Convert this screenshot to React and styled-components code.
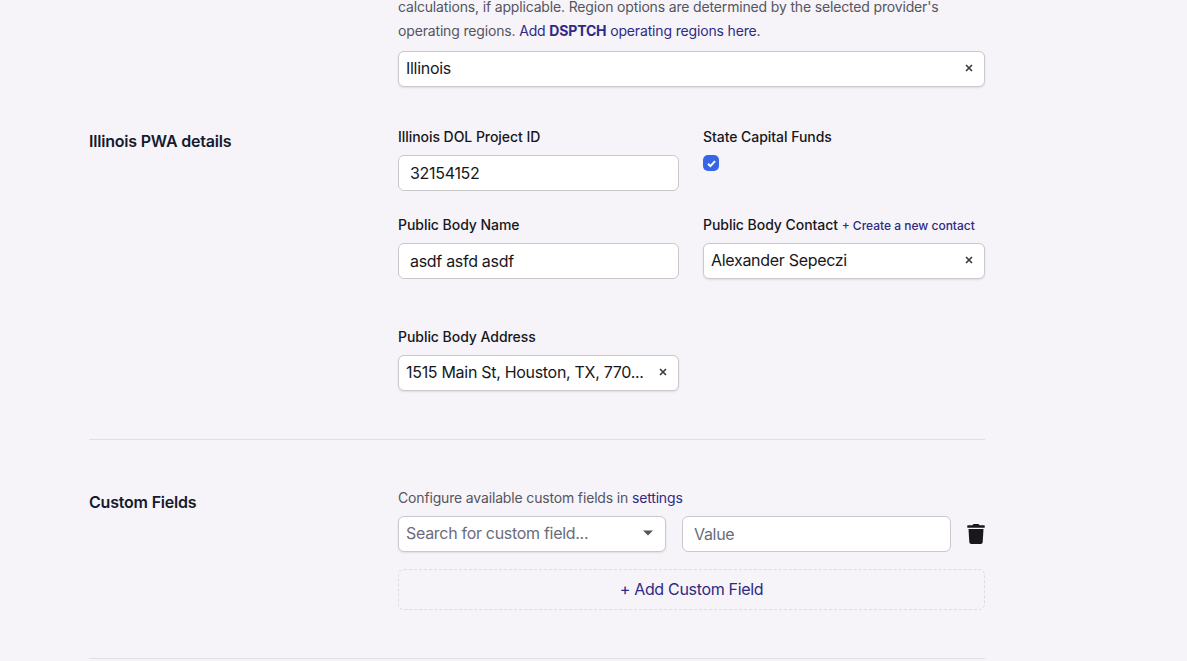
import React from "react";
import styled, { createGlobalStyle } from "styled-components";
import { FaTrash } from "react-icons/fa";

const GlobalStyle = createGlobalStyle`
  html, body {
    margin: 0;
    padding: 0;
    height: 100%;
    overflow: hidden;
    background: #f6f4f8;
    font-family: Inter, "Liberation Sans", sans-serif;
  }
`;

const Page = styled.div`
  width: 896px;
  margin: -5px 0 0 89px;
`;

const Section = styled.section`
  display: grid;
  grid-template-columns: 309px 587px;
  padding-bottom: ${(p) => p.$bottom}px;
  border-bottom: ${(p) => (p.$divider ? "1px solid #dfdee3" : "none")};
  margin-bottom: ${(p) => p.$after}px;
`;

const SectionTitle = styled.h2`
  margin: 0;
  padding-top: ${(p) => p.$top}px;
  font-size: 16px;
  line-height: 24px;
  font-weight: 600;
  letter-spacing: -0.2px;
  color: #171a2e;
`;

const SectionBody = styled.div`
  padding-top: ${(p) => p.$top || 0}px;
`;

const Help = styled.p`
  margin: 0 0 ${(p) => p.$gap}px;
  font-size: 14px;
  line-height: 24px;
  letter-spacing: -0.16px;
  color: #55555f;
`;

const TextLink = styled.a`
  color: #2f2a85;
  text-decoration: none;
  font-size: ${(p) => p.$size || "inherit"};
  letter-spacing: ${(p) => (p.$size ? "0" : "inherit")};

  b {
    font-weight: 700;
  }
`;

const FieldGrid = styled.div`
  display: grid;
  grid-template-columns: 281px 282px;
  column-gap: 24px;
  row-gap: 25px;
`;

const Field = styled.div`
  display: flex;
  flex-direction: column;
  margin-bottom: ${(p) => (p.$spaced ? "24px" : "0")};
`;

const Label = styled.label`
  height: 18px;
  margin-bottom: 9px;
  font-size: 14px;
  line-height: 18px;
  font-weight: 500;
  letter-spacing: -0.05px;
  color: #17171c;
  white-space: nowrap;
`;

const Input = styled.div`
  box-sizing: border-box;
  height: 36px;
  width: ${(p) => p.$width || "100%"};
  padding: 0 11px;
  display: flex;
  align-items: center;
  background: #fff;
  border: 1px solid #c9c8cd;
  border-radius: 6px;
  font-size: 16px;
  letter-spacing: -0.3px;
  color: ${(p) => (p.$placeholder ? "#6b6c7b" : "#17171c")};
`;

const Select = styled.div`
  box-sizing: border-box;
  height: 36px;
  width: ${(p) => p.$width || "100%"};
  padding: 0 11px 2px 7px;
  display: flex;
  align-items: center;
  gap: 8px;
  background: #fff;
  border: 1px solid #c9c8cd;
  border-radius: 6px;
  box-shadow: 0 1px 2px rgba(20, 20, 40, 0.1);
  font-size: 16px;
  letter-spacing: -0.3px;
  color: ${(p) => (p.$placeholder ? "#6b6c7b" : "#17171c")};
`;

const SelectText = styled.span`
  flex: 1;
  min-width: 0;
  white-space: nowrap;
`;

const Checkbox = styled.span`
  width: 16px;
  height: 16px;
  display: flex;
  align-items: center;
  justify-content: center;
  background: #3666e6;
  border-radius: 5px;
`;

const CustomRow = styled.div`
  display: flex;
  align-items: center;
  margin-bottom: 17px;
`;

const RowGap = styled.span`
  width: 16px;
`;

const TrashButton = styled.button`
  margin-left: 16px;
  padding: 0;
  width: 18px;
  height: 21px;
  display: flex;
  align-items: center;
  justify-content: center;
  background: none;
  border: none;
  color: #17171c;
`;

const AddButton = styled.button`
  box-sizing: border-box;
  display: block;
  width: 100%;
  height: 41px;
  padding: 0 0 2px;
  background: none;
  border: 1px dashed #dcdbe1;
  border-radius: 6px;
  font-family: inherit;
  font-size: 16px;
  letter-spacing: -0.32px;
  color: #2f2a85;
`;

const ClearIcon = () => (
  <svg width="8" height="8" viewBox="0 0 8 8" style={{ flexShrink: 0 }}>
    <path d="M1 1l6 6M7 1L1 7" stroke="#3c3c44" strokeWidth="1.7" />
  </svg>
);

const CaretIcon = () => (
  <svg width="12" height="6" viewBox="0 0 12 6" style={{ flexShrink: 0 }}>
    <path d="M1 0.5h10L6 5.5z" fill="#55555f" />
  </svg>
);

const CheckIcon = () => (
  <svg width="11" height="11" viewBox="0 0 11 11">
    <path d="M2 5.8l2.4 2.3 4.6-5" fill="none" stroke="#fff" strokeWidth="2" />
  </svg>
);

export default function App() {
  return (
    <>
      <GlobalStyle />
      <Page>
        <Section $bottom={26} $after={0}>
          <div />
          <SectionBody>
            <Help $gap={8}>
              calculations, if applicable. Region options are determined by the selected provider's
              <br />
              operating regions.{" "}
              <TextLink href="#">
                Add <b>DSPTCH</b> operating regions here.
              </TextLink>
            </Help>
            <Select>
              <SelectText>Illinois</SelectText>
              <ClearIcon />
            </Select>
          </SectionBody>
        </Section>

        <Section $bottom={48} $divider $after={46}>
          <SectionTitle $top={16}>Illinois PWA details</SectionTitle>
          <SectionBody $top={15}>
            <FieldGrid>
              <Field>
                <Label>Illinois DOL Project ID</Label>
                <Input>32154152</Input>
              </Field>
              <Field>
                <Label>State Capital Funds</Label>
                <Checkbox>
                  <CheckIcon />
                </Checkbox>
              </Field>
              <Field>
                <Label>Public Body Name</Label>
                <Input>asdf asfd asdf</Input>
              </Field>
              <Field $spaced>
                <Label>
                  Public Body Contact{" "}
                  <TextLink href="#" $size="12px">
                    + Create a new contact
                  </TextLink>
                </Label>
                <Select>
                  <SelectText>Alexander Sepeczi</SelectText>
                  <ClearIcon />
                </Select>
              </Field>
              <Field>
                <Label>Public Body Address</Label>
                <Select>
                  <SelectText>1515 Main St, Houston, TX, 770...</SelectText>
                  <ClearIcon />
                </Select>
              </Field>
            </FieldGrid>
          </SectionBody>
        </Section>

        <Section $bottom={48} $divider $after={0}>
          <SectionTitle $top={4}>Custom Fields</SectionTitle>
          <SectionBody>
            <Help $gap={6}>
              Configure available custom fields in <TextLink href="#">settings</TextLink>
            </Help>
            <CustomRow>
              <Select $width="268px" $placeholder>
                <SelectText>Search for custom field...</SelectText>
                <CaretIcon />
              </Select>
              <RowGap />
              <Input $width="269px" $placeholder>
                Value
              </Input>
              <TrashButton aria-label="Remove">
                <FaTrash size={20} />
              </TrashButton>
            </CustomRow>
            <AddButton>+ Add Custom Field</AddButton>
          </SectionBody>
        </Section>
      </Page>
    </>
  );
}
